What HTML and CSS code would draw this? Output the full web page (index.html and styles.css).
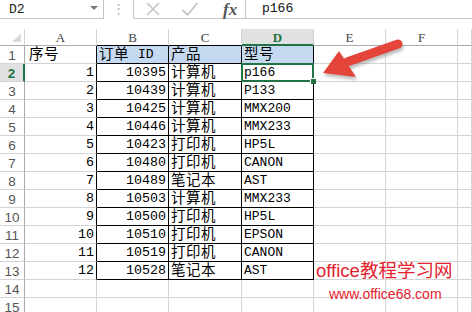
FILE: index.html
```html
<!DOCTYPE html>
<html>
<head>
<meta charset="utf-8">
<link rel="stylesheet" href="styles.css">
</head>
<body>
<div class="app">
  <div class="fbar">
    <div class="namebox"><span class="nm">D2</span><span class="dd"></span></div>
    <div class="dots">⋮</div>
    <div class="btns">
      <svg class="ic x" width="16" height="16" viewBox="0 0 16 16"><path d="M2 2 L14 14 M14 2 L2 14" stroke="#c4c4c4" stroke-width="1.6" fill="none"/></svg>
      <svg class="ic ok" width="18" height="16" viewBox="0 0 18 16"><path d="M1.5 9 L6.5 14 L16.5 2" stroke="#c4c4c4" stroke-width="1.8" fill="none"/></svg>
      <span class="ic fx">fx</span>
    </div>
    <div class="input">p166</div>
  </div>
  <div class="sheet">
    <div class="grid">
      <div class="c corner"><span class="tri"></span></div>
      <div class="c ch">A</div>
      <div class="c ch tb">B</div>
      <div class="c ch tb">C</div>
      <div class="c ch tb sel">D</div>
      <div class="c ch">E</div>
      <div class="c ch">F</div>
      <div class="c ch"></div>

      <div class="c rh">1</div>
      <div class="c zh br first">序号</div>
      <div class="c zh t hd"><span>订单</span><span class="m id">ID</span></div>
      <div class="c zh t hd">产品</div>
      <div class="c zh t hd">型号</div>
      <div class="c"></div><div class="c"></div><div class="c"></div>

      <div class="c rh rsel">2</div>
      <div class="c n br">1</div>
      <div class="c n t">10395</div>
      <div class="c zh t">计算机</div>
      <div class="c m t active">p166<div class="selbox"><span class="handle"></span></div></div>
      <div class="c"></div><div class="c"></div><div class="c"></div>

      <div class="c rh">3</div>
      <div class="c n br">2</div>
      <div class="c n t">10439</div>
      <div class="c zh t">计算机</div>
      <div class="c m t">P133</div>
      <div class="c"></div><div class="c"></div><div class="c"></div>

      <div class="c rh">4</div>
      <div class="c n br">3</div>
      <div class="c n t">10425</div>
      <div class="c zh t">计算机</div>
      <div class="c m t">MMX200</div>
      <div class="c"></div><div class="c"></div><div class="c"></div>

      <div class="c rh">5</div>
      <div class="c n br">4</div>
      <div class="c n t">10446</div>
      <div class="c zh t">计算机</div>
      <div class="c m t">MMX233</div>
      <div class="c"></div><div class="c"></div><div class="c"></div>

      <div class="c rh">6</div>
      <div class="c n br">5</div>
      <div class="c n t">10423</div>
      <div class="c zh t">打印机</div>
      <div class="c m t">HP5L</div>
      <div class="c"></div><div class="c"></div><div class="c"></div>

      <div class="c rh">7</div>
      <div class="c n br">6</div>
      <div class="c n t">10480</div>
      <div class="c zh t">打印机</div>
      <div class="c m t">CANON</div>
      <div class="c"></div><div class="c"></div><div class="c"></div>

      <div class="c rh">8</div>
      <div class="c n br">7</div>
      <div class="c n t">10489</div>
      <div class="c zh t">笔记本</div>
      <div class="c m t">AST</div>
      <div class="c"></div><div class="c"></div><div class="c"></div>

      <div class="c rh">9</div>
      <div class="c n br">8</div>
      <div class="c n t">10503</div>
      <div class="c zh t">计算机</div>
      <div class="c m t">MMX233</div>
      <div class="c"></div><div class="c"></div><div class="c"></div>

      <div class="c rh">10</div>
      <div class="c n br">9</div>
      <div class="c n t">10500</div>
      <div class="c zh t">打印机</div>
      <div class="c m t">HP5L</div>
      <div class="c"></div><div class="c"></div><div class="c"></div>

      <div class="c rh">11</div>
      <div class="c n br">10</div>
      <div class="c n t">10510</div>
      <div class="c zh t">打印机</div>
      <div class="c m t">EPSON</div>
      <div class="c"></div><div class="c"></div><div class="c"></div>

      <div class="c rh">12</div>
      <div class="c n br">11</div>
      <div class="c n t">10519</div>
      <div class="c zh t">打印机</div>
      <div class="c m t">CANON</div>
      <div class="c"></div><div class="c"></div><div class="c"></div>

      <div class="c rh">13</div>
      <div class="c n br">12</div>
      <div class="c n t">10528</div>
      <div class="c zh t">笔记本</div>
      <div class="c m t">AST</div>
      <div class="c"></div><div class="c"></div><div class="c"></div>

      <div class="c rh">14</div>
      <div class="c"></div><div class="c"></div><div class="c"></div><div class="c"></div><div class="c"></div><div class="c"></div><div class="c"></div>

      <div class="c rh">15</div>
      <div class="c"></div><div class="c"></div><div class="c"></div><div class="c"></div><div class="c"></div><div class="c"></div><div class="c"></div>
    </div>

    <svg class="arrow" width="472" height="312" viewBox="0 0 472 312">
      <defs>
        <filter id="sh" x="-20%" y="-20%" width="140%" height="140%">
          <feGaussianBlur stdDeviation="1.5"/>
        </filter>
      </defs>
      <g fill="#8a8a8a" stroke="#8a8a8a" opacity="0.55" filter="url(#sh)" transform="translate(1,3)">
        <line x1="347" y1="62" x2="398" y2="44" stroke-width="9" stroke-linecap="round"/>
        <polygon points="323,73 339,51 356,77" stroke="none"/>
      </g>
      <g fill="#e5443b" stroke="#e5443b">
        <line x1="347" y1="62" x2="398" y2="44" stroke-width="9" stroke-linecap="round"/>
        <polygon points="323,73 339,51 356,77" stroke="none"/>
      </g>
    </svg>

    <div class="wm">
      <div class="wm1">office教程学习网</div>
      <div class="wm2">www.office68.com</div>
    </div>
  </div>
</div>
</body>
</html>
```

FILE: styles.css
```css
* { box-sizing: border-box; }
html, body { margin: 0; padding: 0; }
body {
  width: 472px;
  height: 312px;
  overflow: hidden;
  background: #fff;
  font-family: "Liberation Sans", "Noto Sans CJK SC", sans-serif;
}
.app { width: 472px; height: 312px; position: relative; overflow: hidden; }

/* formula bar */
.fbar {
  height: 19px;
  display: flex;
  align-items: stretch;
  margin-bottom: 10px;
}
.namebox {
  width: 104px;
  border: 1px solid #c6c6c6;
  border-top: none;
  border-left: none;
  display: flex;
  align-items: center;
  padding-left: 9px;
  position: relative;
}
.nm {
  font-family: "Liberation Mono", monospace;
  font-size: 13px;
  color: #222;
}
.dd {
  position: absolute;
  right: 5px;
  top: 6px;
  width: 0; height: 0;
  border-left: 4px solid transparent;
  border-right: 4px solid transparent;
  border-top: 4px solid #777;
}
.dots {
  width: 29px;
  text-align: center;
  color: #b0b0b0;
  font-size: 13px;
  line-height: 17px;
}
.btns {
  width: 112px;
  border-left: 1px solid #c6c6c6;
  border-bottom: 1px solid #c6c6c6;
  display: flex;
  align-items: center;
}
.ic { display: block; }
.x { margin-left: 11px; margin-top: -1px; }
.ok { margin-left: 20px; margin-top: -1px; }
.fx {
  margin-left: 24px;
  font-family: "Liberation Serif", serif;
  font-style: italic;
  font-weight: bold;
  font-size: 17px;
  color: #555;
  line-height: 17px;
}
.input {
  flex: 1;
  border-left: 1px solid #c6c6c6;
  border-bottom: 1px solid #c6c6c6;
  padding-left: 16px;
  font-family: "Liberation Mono", monospace;
  font-size: 13px;
  line-height: 18px;
  color: #111;
}

/* sheet */
.sheet { position: relative; }
.grid {
  display: grid;
  grid-template-columns: 25px 72px 72px 73px 72px 72px 72px 14px;
  grid-template-rows: 17px repeat(15, 18px);
}
.c {
  border-right: 1px solid #d4d4d4;
  border-bottom: 1px solid #d4d4d4;
  white-space: nowrap;
  overflow: visible;
  display: flex;
  align-items: center;
  position: relative;
}
.corner { border-bottom-color: #ababab; border-right-color: #d4d4d4; }
.tri {
  position: absolute;
  right: 3px;
  bottom: 3px;
  width: 0; height: 0;
  border-left: 9px solid transparent;
  border-bottom: 9px solid #dcdcdc;
}
.ch {
  justify-content: center;
  font-family: "Liberation Serif", serif;
  font-size: 13px;
  color: #444;
  border-bottom-color: #ababab;
  padding-top: 1px;
}
.ch.tb { border-bottom-color: #000; }
.ch.sel {
  background: #e1e1e1;
  color: #217346;
  font-weight: bold;
  border-bottom: 2px solid #217346;
  padding-top: 2px;
}
.rh {
  justify-content: center;
  font-family: "Liberation Sans", sans-serif;
  font-size: 13.5px;
  color: #555;
  border-right-color: #ababab;
  padding-top: 1px;
}
.rsel {
  background: #e1e1e1;
  color: #217346;
  font-weight: bold;
  border-right: 2px solid #217346;
}
.zh {
  font-family: "Noto Sans CJK SC", sans-serif;
  font-size: 14.5px;
  letter-spacing: 0.5px;
  padding-left: 2px;
  color: #000;
  line-height: 1;
  padding-bottom: 3px;
}
.first { padding-left: 4px; }
.m {
  font-family: "Liberation Mono", monospace;
  font-size: 13px;
  padding-left: 2px;
  color: #000;
}
.zh .m { font-size: 13px; letter-spacing: 0; }
.id { margin-left: 9px; padding-left: 0; padding-top: 2px; }
.n {
  justify-content: flex-end;
  font-family: "Liberation Mono", monospace;
  font-size: 13.3px;
  padding-right: 2px;
  color: #000;
}
.br { border-right-color: #000; }
.t { border-right-color: #000; border-bottom-color: #000; }
.hd { background: #c5d9f1; }

.active { z-index: 2; }
.selbox {
  position: absolute;
  left: -1px;
  top: -1px;
  right: -1px;
  bottom: -1px;
  border: 2px solid #217346;
}
.handle {
  position: absolute;
  right: -4px;
  bottom: -4px;
  width: 6px;
  height: 6px;
  background: #217346;
  border-left: 1px solid #fff;
  border-top: 1px solid #fff;
}

.arrow {
  position: absolute;
  left: 0;
  top: -29px;
  pointer-events: none;
}

.wm {
  position: absolute;
  left: 316px;
  top: 231px;
  color: #e5212d;
}
.wm1 {
  font-family: "Liberation Sans", "Noto Sans CJK SC", sans-serif;
  font-size: 18.5px;
  line-height: 22px;
  text-shadow: 0 0 2px #fff, 0 0 2px #fff;
}
.wm2 {
  font-family: "Liberation Sans", sans-serif;
  font-size: 14px;
  line-height: 16px;
  margin-top: 4px;
  margin-left: 13px;
  text-shadow: 0 0 2px #fff;
}
```
